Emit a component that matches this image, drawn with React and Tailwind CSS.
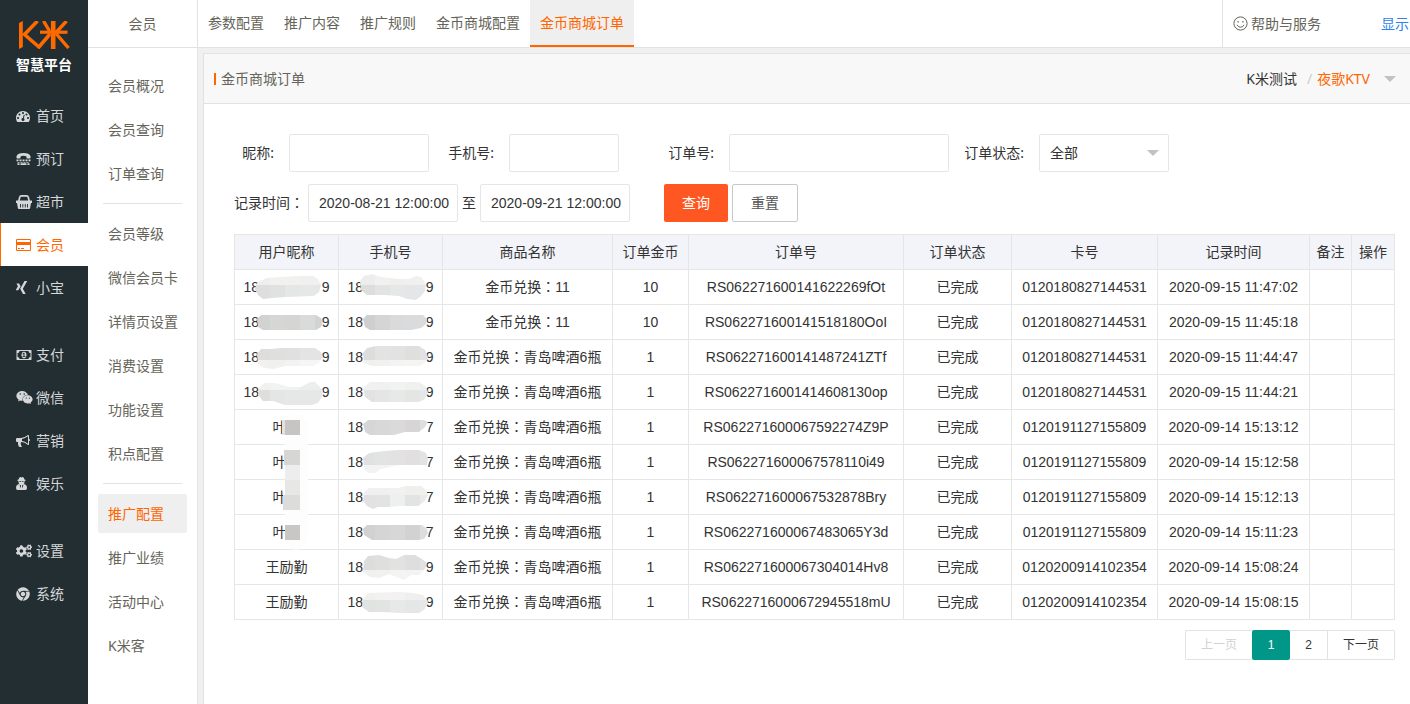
import React from "react";
import { FaXing, FaWeixin, FaCogs, FaChrome } from "react-icons/fa";

const CJK = "font-['Noto_Sans','Noto_Sans_CJK_SC',sans-serif]";

/* ---------- icons ---------- */

function Glyph({ box, d, className }) {
  return (
    <svg viewBox={box} className={className} fill="currentColor" aria-hidden="true">
      <path d={d} />
    </svg>
  );
}

const DashboardIcon = () => (
  <Glyph
    box="0 128 1792 1536"
    className="h-3 w-3.5"
    d="M384 1152q0-53-37.5-90.5t-90.5-37.5-90.5 37.5-37.5 90.5 37.5 90.5 90.5 37.5 90.5-37.5 37.5-90.5zm192-448q0-53-37.5-90.5t-90.5-37.5-90.5 37.5-37.5 90.5 37.5 90.5 90.5 37.5 90.5-37.5 37.5-90.5zm428 481l101-382q6-26-7.5-48.5t-38.5-29.5-48 6.5-30 39.5l-101 382q-60 5-107 43.5t-63 98.5q-20 77 20 146t117 89 146-20 89-117q16-60-6-117t-72-91zm660-33q0-53-37.5-90.5t-90.5-37.5-90.5 37.5-37.5 90.5 37.5 90.5 90.5 37.5 90.5-37.5 37.5-90.5zm-640-640q0-53-37.5-90.5t-90.5-37.5-90.5 37.5-37.5 90.5 37.5 90.5 90.5 37.5 90.5-37.5 37.5-90.5zm448 192q0-53-37.5-90.5t-90.5-37.5-90.5 37.5-37.5 90.5 37.5 90.5 90.5 37.5 90.5-37.5 37.5-90.5zm320 448q0 261-141 483-19 29-54 29h-1402q-35 0-54-29-141-221-141-483 0-182 71-348t191-286 286-191 348-71 348 71 286 191 191 286 71 348z"
  />
);

const CardIcon = () => (
  <Glyph
    box="0 128 1920 1536"
    className="h-3 w-[15px]"
    d="M1760 128q66 0 113 47t47 113v1216q0 66-47 113t-113 47h-1600q-66 0-113-47t-47-113v-1216q0-66 47-113t113-47h1600zm-1600 128q-13 0-22.500 9.500t-9.500 22.500v224h1664v-224q0-13-9.500-22.500t-22.500-9.500h-1600zm1600 1280q13 0 22.500-9.500t9.500-22.500v-608h-1664v608q0 13 9.500 22.500t22.500 9.500h1600zm-1504-128v-128h256v128h-256zm384 0v-128h384v128h-384z"
  />
);

const MoneyIcon = () => (
  <Glyph
    box="0 256 1920 1280"
    className="h-2.5 w-4"
    d="M768 1152h384v-96h-128v-448h-114l-148 137 77 80q42-37 55-57h2v288h-128v96zm512-256q0 70-21 142t-59.5 134-101.5 101-138 39-138-39-101.5-101-59.5-134-21-142 21-142 59.5-134 101.5-101 138-39 138 39 101.5 101 59.5 134 21 142zm512 256v-512q-106 0-181-75t-75-181h-1152q0 106-75 181t-181 75v512q106 0 181 75t75 181h1152q0-106 75-181t181-75zm128-832v1152q0 26-19 45t-45 19h-1792q-26 0-45-19t-19-45v-1152q0-26 19-45t45-19h1792q26 0 45 19t19 45z"
  />
);

const HornIcon = () => (
  <Glyph
    box="0 128 1792 1536"
    className="h-3 w-3.5"
    d="M1664 640q53 0 90.5 37.5t37.5 90.5-37.5 90.5-90.5 37.5v384q0 52-38 90t-90 38q-417-347-812-380-58 19-91 66t-31 100.5 40 92.5q-20 33-23 65.5t6 58 33.5 55 48 50 61.5 50.5q-29 58-111.5 83t-168.5 11.5-132-55.5q-7-23-29.5-87.5t-32-94.5-23-89-15-101 3.5-98.5 22-110.5h-122q-66 0-113-47t-47-113v-192q0-66 47-113t113-47h480q435 0 896-384 52 0 90 38t38 90v384zm-128 604v-954q-394 302-768 343v270q377 42 768 341z"
  />
);

const PhoneIcon = () => (
  <svg viewBox="0 0 14 12" className="h-3 w-[15px]" fill="currentColor" aria-hidden="true">
    <path d="M0 4.800V3.200Q1.200 0 7 0t7 3.200v1.600q0 .7-.7.7h-2.600q-.7 0-.7-.7V3.400Q8.700 2.800 7 2.800t-3 .6v1.400q0 .7-.7.7H.7Q0 5.500 0 4.800z" />
    <path d="M0 6.500h2v1.700H0zM3 6.500h2v1.700H3zM6 6.500h2v1.700H6zM9 6.500h2v1.700H9zM12 6.500h2v1.700h-2zM1 9h2v.8H1zM4 9h2v.8H4zM7 9h2v.8H7zM10 9h2v.8h-2zM1 10.300h2V12H1zM4 10.300h6V12H4zM11 10.300h2V12h-2z" />
  </svg>
);

const BasketIcon = () => (
  <svg viewBox="0 0 16 14" className="h-3.5 w-4" fill="none" stroke="currentColor" aria-hidden="true">
    <path d="M2.800 6.500 3.600 2.600Q4 .9 5.600 .9h4.800q1.600 0 2 1.700l.8 3.900" strokeWidth="1.700" />
    <path d="M0 5.500h16V8H0z" fill="currentColor" stroke="none" />
    <path
      d="M1 8h14l-.9 5.200q-.2.8-1 .8H2.900q-.8 0-1-.8zM4 9v3.500h.9V9zm2.400 0v3.500h.9V9zm2.400 0v3.500h.9V9zm2.300 0v3.500h.9V9z"
      fill="currentColor"
      fillRule="evenodd"
      stroke="none"
    />
  </svg>
);

const AgentIcon = () => (
  <svg viewBox="0 0 11 13" className="h-[13px] w-[11px]" fill="currentColor" aria-hidden="true">
    <path d="M2.600 2.500Q3 0 4.200 0q.7 0 1.300.4Q6.100 0 6.800 0 8 0 8.400 2.500q1.300.3 1.300.8 0 .6-1.200.8v1.200q0 1.100-.7 1.700Q11 7.600 11 11q0 2-1.600 2H1.600Q0 13 0 11 0 7.600 3.200 7q-.7-.6-.7-1.700V4.100Q1.300 3.900 1.300 3.300q0-.5 1.300-.8z" />
    <path d="M3.300 4.300h1.800v.8H3.600zM5.900 4.300h1.800l-.3.800H5.900zM3.600 7.600l1.400.8-.5 3.200zM7.400 7.600 6 8.400l.5 3.200z" fill="#232e33" />
  </svg>
);

const SmileIcon = () => (
  <svg viewBox="0 0 15 15" className="size-[15px]" fill="none" stroke="currentColor" aria-hidden="true">
    <circle cx="7.500" cy="7.500" r="6.600" />
    <path d="M4 8.800q1 2.400 3.500 2.400t3.500-2.400" />
    <path d="M4.500 5h1.200v1.400H4.500zM9.300 5h1.200v1.400H9.300z" fill="currentColor" stroke="none" />
  </svg>
);

const Caret = ({ className }) => (
  <svg viewBox="0 0 12 6" className={className} fill="#c2c2c2" aria-hidden="true">
    <path d="M0 0h12L6 6z" />
  </svg>
);

const Logo = () => (
  <svg viewBox="0 0 52 28" className="h-7 w-[52px]" fill="none" stroke="#ff6a00" strokeWidth="3.600" role="img" aria-label="K米">
    <path d="M1 2 4.800 0V26L1 28z" fill="#ff6a00" stroke="none" />
    <path d="M19.500 0 6.500 13.500 21 26 32 13" />
    <path d="M22 11.200h27.500" strokeWidth="3.200" />
    <path d="M35.200 0v28" strokeWidth="4.600" />
    <path d="M25.500 0 31.500 10M48.500 0 38.500 11M38 12.500 50.500 27" strokeWidth="3.400" />
  </svg>
);

// Full-width colon with its dots in the middle of the em square.
const Colon = () => <span className="font-['Noto_Sans_CJK_TC',sans-serif] leading-none">：</span>;

/* ---------- navigation ---------- */

const mainNav = [
  [
    { text: "首页", icon: <DashboardIcon /> },
    { text: "预订", icon: <PhoneIcon /> },
    { text: "超市", icon: <BasketIcon /> },
    { text: "会员", icon: <CardIcon />, active: true },
    { text: "小宝", icon: <FaXing size={15} className="-ml-0.5" /> },
  ],
  [
    { text: "支付", icon: <MoneyIcon /> },
    { text: "微信", icon: <FaWeixin size={17} /> },
    { text: "营销", icon: <HornIcon /> },
    { text: "娱乐", icon: <AgentIcon /> },
  ],
  [
    { text: "设置", icon: <FaCogs size={16} /> },
    { text: "系统", icon: <FaChrome size={14} /> },
  ],
];

const subNav = [
  ["会员概况", "会员查询", "订单查询"],
  ["会员等级", "微信会员卡", "详情页设置", "消费设置", "功能设置", "积点配置"],
  ["推广配置", "推广业绩", "活动中心", "K米客"],
];

const tabs = ["参数配置", "推广内容", "推广规则", "金币商城配置", "金币商城订单"];

function MainSidebar() {
  return (
    <nav className="w-22 shrink-0 bg-[#232e33] text-sm text-[#d5d7d8]" aria-label="主菜单">
      <div className="flex flex-col items-center pt-[21px]">
        <Logo />
        <div className="mt-1 h-[41px] text-sm leading-6 font-bold text-white">智慧平台</div>
      </div>
      <div className="flex flex-col gap-6">
        {mainNav.map((group, i) => (
          <ul key={i}>
            {group.map((n) => (
              <li key={n.text}>
                <a
                  href="#"
                  className={
                    n.active
                      ? "flex h-[43px] items-center border-l border-[#ff6a00] bg-white pl-[15px] text-[#ff6600]"
                      : "flex h-[43px] items-center pl-4"
                  }
                >
                  <span className="flex w-5 items-center">{n.icon}</span>
                  {n.text}
                </a>
              </li>
            ))}
          </ul>
        ))}
      </div>
    </nav>
  );
}

function SubSidebar() {
  return (
    <nav className="w-[110px] shrink-0 border-r border-[#e2e2e2] bg-white text-sm text-[#65645a]" aria-label="会员菜单">
      <div className="flex h-12 items-center justify-center border-b border-[#e2e2e2]">会员</div>
      <div className="flex flex-col px-2.5 pt-[18px]">
        {subNav.map((group, i) => (
          <React.Fragment key={i}>
            {i > 0 && <hr className="mx-[5px] my-2.5 border-[#e2e2e2]" />}
            <ul className="flex flex-col gap-[5px]">
              {group.map((t) => (
                <li key={t}>
                  <a
                    href="#"
                    className={
                      t === "推广配置"
                        ? "flex h-[39px] items-center rounded-xs bg-[#efefef] pl-2.5 whitespace-nowrap text-[#ff6600]"
                        : "flex h-[39px] items-center pl-2.5 whitespace-nowrap"
                    }
                  >
                    {t}
                  </a>
                </li>
              ))}
            </ul>
          </React.Fragment>
        ))}
      </div>
    </nav>
  );
}

function TopBar() {
  return (
    <header className="flex h-12 border-b border-[#e2e2e2] bg-white text-sm text-[#65645a]">
      <nav className="flex" aria-label="推广配置">
        {tabs.map((t, i) => (
          <a
            key={t}
            href="#"
            className={
              i === 4
                ? "flex items-center border-b-2 border-[#ff6600] bg-[#efefef] px-2.5 text-[#ff6600]"
                : "flex items-center border-b-2 border-transparent px-2.5"
            }
          >
            {t}
          </a>
        ))}
      </nav>
      <div className="ml-auto flex items-center border-l border-[#e2e2e2] pl-2.5">
        <a href="#" className="flex items-center gap-[3px]">
          <SmileIcon />
          帮助与服务
        </a>
        <a href="#" className="ml-[60px] pr-px text-[#2d82f0]">
          显示
        </a>
      </div>
    </header>
  );
}

/* ---------- filters ---------- */

const inputStyle = "h-[38px] rounded-xs border border-[#e6e6e6] bg-white pl-2.5 text-[#333]";

function Filters() {
  return (
    <form className="text-sm text-[#333]" onSubmit={(e) => e.preventDefault()}>
      <div className="flex items-center">
        <label htmlFor="nick" className="w-[55px] pr-[15px] text-right">昵称:</label>
        <input id="nick" className={inputStyle + " w-[140px]"} />
        <label htmlFor="phone" className="w-20 pr-[15px] text-right">手机号:</label>
        <input id="phone" className={inputStyle + " w-[110px]"} />
        <label htmlFor="order" className="w-[110px] pr-[15px] text-right">订单号:</label>
        <input id="order" className={inputStyle + " w-[220px]"} />
        <label htmlFor="state" className="w-[90px] pr-[15px] text-right">订单状态:</label>
        <div className="relative w-[130px]">
          <select id="state" className={inputStyle + " w-full appearance-none"}>
            <option>全部</option>
          </select>
          <Caret className="pointer-events-none absolute top-4 right-2.5 h-1.5 w-3" />
        </div>
      </div>
      <div className="mt-3 flex items-center">
        <label htmlFor="from" className="w-[74px]">
          记录时间
          <Colon />
        </label>
        <input id="from" defaultValue="2020-08-21 12:00:00" className={inputStyle + " w-[150px] font-['Liberation_Sans',sans-serif]"} />
        <label htmlFor="to" className="px-1">至</label>
        <input id="to" defaultValue="2020-09-21 12:00:00" className={inputStyle + " w-[150px] font-['Liberation_Sans',sans-serif]"} />
        <button type="submit" className="ml-[34px] h-[38px] w-16 rounded-xs bg-[#ff5722] text-white">查询</button>
        <button type="reset" className="ml-1 h-[38px] w-[66px] rounded-xs border border-[#c9c9c9] bg-white text-[#555]">重置</button>
      </div>
    </form>
  );
}

/* ---------- masked values ---------- */

// Each mask is an outline filled with mosaic tiles: `top` colours above `split`, `low` colours below it.
function Mask({ id, mask, start }) {
  const [d, split, top, low] = mask;
  return (
    <svg className="absolute top-0 left-0 z-10 overflow-visible" width="103" height="34" aria-hidden="true">
      <clipPath id={id}>
        <path d={d} />
      </clipPath>
      <g clipPath={`url(#${id})`} shapeRendering="crispEdges">
        {top.map((c, i) => (
          <rect key={"t" + i} x={start + i * 15} y="0" width="15" height={split} fill={c} />
        ))}
        {low.map((c, i) => (
          <rect key={"l" + i} x={start + i * 15} y={split} width="15" height={34 - split} fill={c} />
        ))}
      </g>
    </svg>
  );
}

const nickMasks = [
  [
    "M21 15 23 12 32 8 47 7 63 6H78L83 9 86 15 84 22 79 26 50 27 37 28 28 29 23 25 20 19z",
    15,
    ["#ededed", "#eeeeee", "#f1f1f0", "#f1f1f0", "#f0f0f0", "#f0f0ef"],
    ["#dedede", "#dedede", "#e0e1e1", "#e5e6e6", "#e6e8e8", "#e5e6e6"],
  ],
  [
    "M22 14 26 10H81L86 13 88 17 86 22 81 25H28L23 22z",
    10,
    [],
    ["#cfcfcf", "#d2d2d2", "#d6d6d5", "#d5d5d4", "#d9dada", "#d3d3d4"],
  ],
  [
    "M22 14 26 9 35 9 47 8H80L86 12 88 17 84 23 78 26H50L38 29 29 28 23 24z",
    20,
    ["#dddddc", "#dddddc", "#dfdfde", "#e0e0e0", "#e4e4e4", "#e4e4e4"],
    ["#f1f1f0", "#f1f1f0", "#f0f0ef", "#f3f3f3", "#f6f6f6", "#f6f6f6"],
  ],
  [
    "M24 13 29 8 40 8 54 12 66 12 75 7H80L85 12 88 16 87 22 83 28 77 30H50L38 26 28 26 23 20z",
    15,
    ["#f0f0ef", "#f1f1f0", "#f2f2f1", "#f1f1f0", "#eceded", "#eceded"],
    ["#dedddd", "#dededd", "#e4e5e5", "#e6e7e7", "#e6e7e7", "#e6e8e8"],
  ],
];

const phoneMasks = [
  [
    "M21 11 25 6 33 4 42 7 60 9 70 9 77 6 82 7 87 14 86 21 82 26 77 30 68 29 60 26 45 25 28 25 22 20z",
    15,
    ["#ededed", "#ededed", "#f1f1f0", "#efefee", "#f0f0ee", "#f0f0f0"],
    ["#dedfdf", "#dddddd", "#e2e3e3", "#e6e7e7", "#e5e6e7", "#e5e6e7"],
  ],
  [
    "M24 14 28 10H84L88 14 87 19 82 23 72 25H31L26 22z",
    10,
    [],
    ["#d1d1d1", "#cfcfcf", "#d5d5d4", "#dadada", "#dadbdc", "#d9dbdc"],
  ],
  [
    "M24 13 28 8 37 6H80L86 10 89 17 86 23 80 26H33L25 23z",
    20,
    ["#dddddc", "#dedddd", "#e3e3e2", "#e2e2e2", "#dfdfde", "#e2e2e2"],
    ["#f0f0ef", "#f0f0ef", "#f1f1f0", "#f4f4f4", "#f5f5f4", "#f4f4f4"],
  ],
  [
    "M24 13 31 7H80L86 11 89 17 86 24 80 27H33L26 22z",
    15,
    ["#f1f1f0", "#f1f1f0", "#f0f0f0", "#f2f2f1", "#f0f0ef", "#eeeeee"],
    ["#dfdfdf", "#e2e2e2", "#e4e5e5", "#e7e8e8", "#e4e5e5", "#e6e7e7"],
  ],
  [
    "M24 14 29 10H85L89 12 86 17 80 22 66 22 55 25H31L26 22z",
    10,
    [],
    ["#d5d5d5", "#d6d6d6", "#d8d8d8", "#dadada", "#d7d5d5", "#dddfdf"],
  ],
  [
    "M24 13 30 8 45 6 60 5H80L87 8 89 13 88 20 60 20 42 24 36 28 29 28 25 23z",
    20,
    ["#e0e0e0", "#e1e1e1", "#e2e3e3", "#e2e2e2", "#e1dfe0", "#e2e4e4"],
    ["#f3f3f3", "#f3f3f3", "#f3f3f2", "#f5f5f5", "#f5f5f5", "#f4f4f4"],
  ],
  [
    "M25 12 30 8 60 8 66 6H82L87 10 89 15 86 21 79 26 60 26 50 27 39 27 34 29 28 26 24 21z",
    15,
    ["#efefef", "#f0f0f0", "#f0f0ef", "#f1f1f1", "#efefee", "#efefee"],
    ["#e2e0e1", "#e3e1e2", "#e4e3e3", "#eeefef", "#e2e3e3", "#e9eaea"],
  ],
  [
    "M24 14 28 10H83L88 14 89 18 85 24 80 25H33L25 20z",
    10,
    [],
    ["#cfcfcf", "#d1d1d1", "#d5d5d5", "#d7d7d7", "#d3d2d2", "#dcdede"],
  ],
  [
    "M25 11 29 6 40 5 50 8 57 9 65 5H76L83 9 88 13 86 19 80 25 72 25 65 30 57 27 50 24 40 28 31 27 24 22z",
    20,
    ["#dcdcdb", "#dedddd", "#dfdfdf", "#e2e2e1", "#dedede", "#e2e2e2"],
    ["#efefee", "#f0f0ef", "#f1f1f0", "#f4f4f4", "#f3f3f3", "#f4f4f4"],
  ],
  [
    "M24 14 29 8 60 7 75 8 84 10 89 16 86 24 80 28 60 28 45 27 30 27 23 22z",
    15,
    ["#f0f0ef", "#f0f0ef", "#f2f2f1", "#f3f1f1", "#efefee", "#efefee"],
    ["#dfe0e0", "#e1e2e2", "#e2e3e3", "#e7e8e8", "#e5e6e6", "#e6e8e8"],
  ],
];

// One stroke runs down the nickname column over four rows.
const NameSmear = () => (
  <svg className="absolute top-0 left-0 z-10 overflow-visible" width="103" height="34" aria-hidden="true">
    <path d="M50 5Q60 2 68 6L73 14V118L71 134Q65 142 56 139L50 132z" fill="#fdfdfd" />
    <g shapeRendering="crispEdges">
      <path d="M47 10h3v15h-3z" fill="#e3e2e1" />
      <path d="M50 10h15v15H50z" fill="#c7c5c4" />
      <path d="M49 40h16v15H49z" fill="#d6d6d4" />
      <path d="M50 55h15v15H50z" fill="#ededed" />
      <path d="M50 70h15v15H50z" fill="#e7e7e6" />
      <path d="M48 85h17v15H48z" fill="#dcdcda" />
      <path d="M50 115h15v15H50z" fill="#c8c7c5" />
    </g>
  </svg>
);

/* ---------- table ---------- */

const headings = ["用户昵称", "手机号", "商品名称", "订单金币", "订单号", "订单状态", "卡号", "记录时间", "备注", "操作"];
const beer = "青岛啤酒6瓶";
const rows = [
  ["18|9", "9", "11", "10", "RS062271600141622269fOt", "0120180827144531", "2020-09-15 11:47:02"],
  ["18|9", "9", "11", "10", "RS062271600141518180OoI", "0120180827144531", "2020-09-15 11:45:18"],
  ["18|9", "9", beer, "1", "RS062271600141487241ZTf", "0120180827144531", "2020-09-15 11:44:47"],
  ["18|9", "9", beer, "1", "RS0622716001414608130op", "0120180827144531", "2020-09-15 11:44:21"],
  ["叶", "7", beer, "1", "RS062271600067592274Z9P", "0120191127155809", "2020-09-14 15:13:12"],
  ["叶", "7", beer, "1", "RS062271600067578110i49", "0120191127155809", "2020-09-14 15:12:58"],
  ["叶", "7", beer, "1", "RS062271600067532878Bry", "0120191127155809", "2020-09-14 15:12:13"],
  ["叶", "7", beer, "1", "RS062271600067483065Y3d", "0120191127155809", "2020-09-14 15:11:23"],
  ["王励勤", "9", beer, "1", "RS062271600067304014Hv8", "0120200914102354", "2020-09-14 15:08:24"],
  ["王励勤", "9", beer, "1", "RS0622716000672945518mU", "0120200914102354", "2020-09-14 15:08:15"],
];

const Masked = ({ last }) => (
  <span className="mx-auto flex w-[86px] justify-between">
    <span>18</span>
    <span>{last}</span>
  </span>
);

function Nick({ value, row }) {
  if (value === "18|9")
    return (
      <>
        <Masked last="9" />
        <Mask id={"nick-mask-" + row} mask={nickMasks[row]} start={5} />
      </>
    );
  if (value === "叶")
    return (
      <>
        <span className="mx-auto block w-7 text-left">叶</span>
        {row === 4 && <NameSmear />}
      </>
    );
  return value;
}

function OrderTable() {
  const td = "h-[35px] border border-[#e6e6e6] whitespace-nowrap";
  return (
    <table className="mt-3 w-full table-fixed border-collapse text-center font-['Liberation_Sans','Noto_Sans_CJK_SC',sans-serif] text-sm text-[#333]">
      <colgroup>
        <col className="w-[104px]" />
        <col className="w-[104px]" />
        <col className="w-[170px]" />
        <col className="w-[76px]" />
        <col />
        <col className="w-[108px]" />
        <col className="w-[146px]" />
        <col className="w-[152px]" />
        <col className="w-[42px]" />
        <col className="w-[43px]" />
      </colgroup>
      <thead className="bg-[#f2f4f9]">
        <tr>
          {headings.map((h) => (
            <th key={h} className={td + " font-normal"}>{h}</th>
          ))}
        </tr>
      </thead>
      <tbody>
        {rows.map((r, i) => (
          <tr key={r[4]}>
            <td className={td + " relative"}>
              <Nick value={r[0]} row={i} />
            </td>
            <td className={td + " relative"}>
              <Masked last={r[1]} />
              <Mask id={"phone-mask-" + i} mask={phoneMasks[i]} start={6} />
            </td>
            <td className={td}>
              金币兑换
              <Colon />
              {r[2]}
            </td>
            <td className={td}>{r[3]}</td>
            <td className={td}>{r[4]}</td>
            <td className={td}>已完成</td>
            <td className={td}>{r[5]}</td>
            <td className={td}>{r[6]}</td>
            <td className={td} />
            <td className={td} />
          </tr>
        ))}
      </tbody>
    </table>
  );
}

function Pager() {
  return (
    <nav className="mt-2.5 flex justify-end font-['Liberation_Sans','Noto_Sans_CJK_SC',sans-serif] text-xs text-[#333]" aria-label="分页">
      <button disabled className="h-[30px] w-[67px] rounded-l-xs border border-r-0 border-[#e2e2e2] text-[#d2d2d2]">上一页</button>
      <button aria-current="page" className="h-[30px] w-[38px] rounded-xs bg-[#009688] text-white">1</button>
      <button className="h-[30px] w-[38px] border-y border-r border-[#e2e2e2]">2</button>
      <button className="h-[30px] w-[67px] rounded-r-xs border border-l-0 border-[#e2e2e2]">下一页</button>
    </nav>
  );
}

export default function App() {
  return (
    <div className={"flex min-h-screen bg-[#f0f0f0] " + CJK}>
      <MainSidebar />
      <SubSidebar />
      <div className="flex min-w-0 flex-1 flex-col">
        <TopBar />
        <main className="mt-[5px] ml-[5px] flex-1 border-t border-l border-[#e2e2e2] bg-white">
          <div className="flex h-[50px] items-center border-b border-[#e2e2e2] bg-[#f8f8f8] pr-[14px] pl-2.5 text-sm">
            <h1 className="flex items-center gap-[5px] text-[#65645a]">
              <span className="h-3 w-0.5 bg-[#ff6600]" />
              金币商城订单
            </h1>
            <button type="button" className="ml-auto flex items-center text-[#333]">
              K米测试
              <span className="mr-[5px] ml-2.5 text-[#ccc]">/</span>
              <span className="text-[#ff6600]">夜歌KTV</span>
              <Caret className="ml-[14px] h-1.5 w-3" />
            </button>
          </div>
          <div className="pt-[30px] pr-[15px] pl-[30px]">
            <Filters />
            <OrderTable />
            <Pager />
          </div>
        </main>
      </div>
    </div>
  );
}
